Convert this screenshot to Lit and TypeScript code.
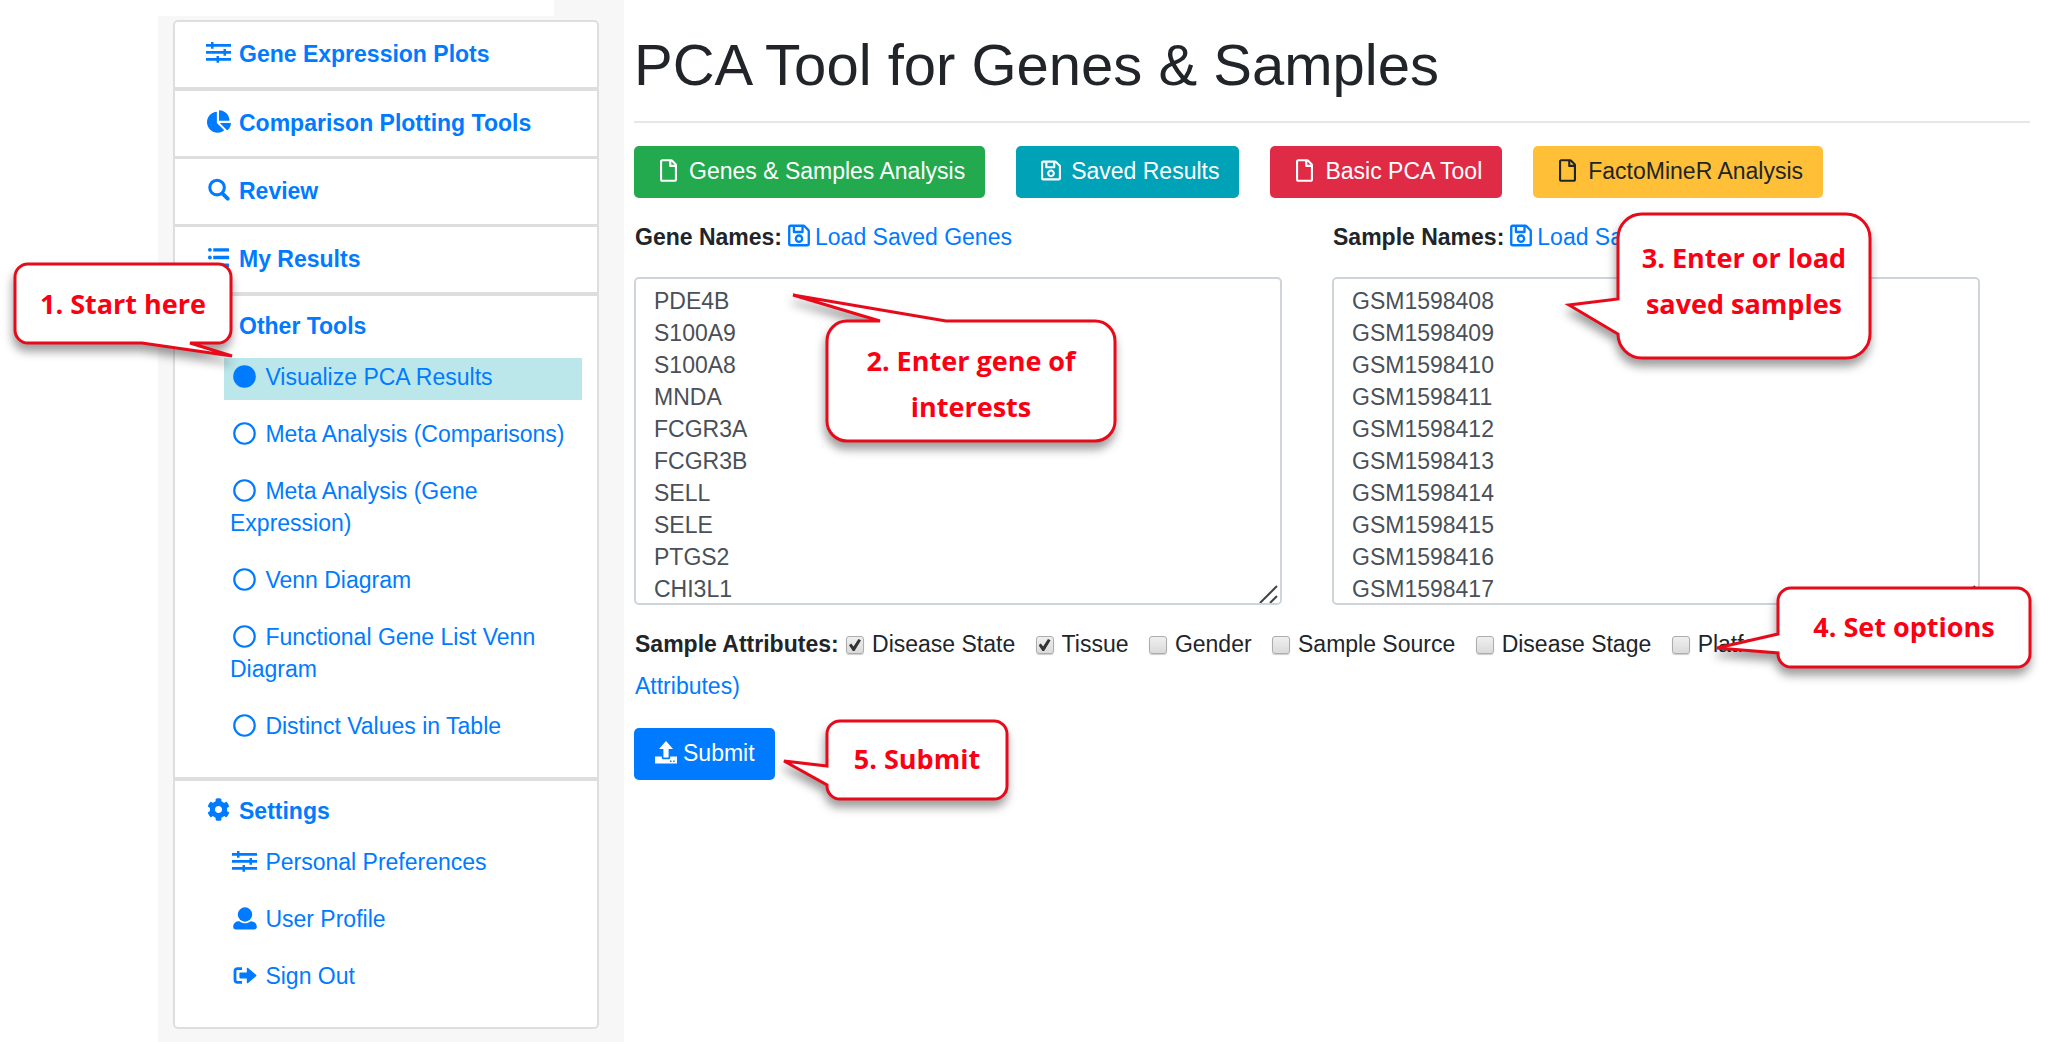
import { LitElement, html, css, svg, nothing, type TemplateResult } from "lit";
import { customElement, property } from "lit/decorators.js";
import { classMap } from "lit/directives/class-map.js";
import { styleMap } from "lit/directives/style-map.js";

interface Glyph {
  w: number;
  h: number;
  body: TemplateResult;
}

const GLYPHS: Record<string, Glyph> = {
  sliders: {
    w: 27,
    h: 23,
    body: svg`<path d="M1 3h5V1h2.500v2h17.500v2.800H8.500v2H6v-2H1zM1 10h17.500V8H21v2h5v2.800h-5v2h-2.500v-2H1zM1 17h10.500v-2H14v2h12v2.800H14v2h-2.500v-2H1z"/>`,
  },
  pie: {
    w: 544,
    h: 512,
    body: svg`<path d="M527.79 288H290.5l158.03 158.03c6.04 6.04 15.98 6.53 22.19.68 38.7-36.46 65.32-85.61 73.13-140.86 1.34-9.46-6.51-17.85-16.06-17.85zm-15.83-64.8C503.72 103.74 408.26 8.28 288.8.04 279.68-.59 272 7.1 272 16.24V240h223.77c9.14 0 16.82-7.68 16.19-16.8zM224 288V50.71c0-9.55-8.39-17.4-17.84-16.06C86.99 51.49-4.1 155.6.14 280.37 4.5 408.51 114.83 513.59 243.03 511.98c50.4-.63 96.97-16.87 135.26-44.03 7.9-5.6 8.42-17.23 1.57-24.08L224 288z"/>`,
  },
  search: {
    w: 24,
    h: 24,
    body: svg`<g fill="none" stroke="currentColor"><circle cx="10.5" cy="10" r="7.6" stroke-width="3.2"/><path d="M16 16l5.6 5.6" stroke-width="4" stroke-linecap="round"/></g>`,
  },
  list: {
    w: 24,
    h: 24,
    body: svg`<circle cx="3" cy="4" r="2"/><circle cx="3" cy="12" r="2"/><circle cx="3" cy="20" r="2"/><rect x="6.500" y="2.300" width="16.500" height="3.500" rx=".6"/><rect x="6.500" y="10.300" width="16.500" height="3.500" rx=".6"/><rect x="6.500" y="18.300" width="16.500" height="3.500" rx=".6"/>`,
  },
  cog: {
    w: 512,
    h: 512,
    body: svg`<path d="M487.4 315.7l-42.6-24.6c4.3-23.2 4.3-47 0-70.2l42.6-24.6c4.9-2.8 7.1-8.6 5.5-14-11.1-35.6-30-67.8-54.7-94.6-3.8-4.1-10-5.1-14.8-2.3L380.8 110c-17.9-15.4-38.5-27.3-60.8-35.1V25.8c0-5.6-3.9-10.5-9.4-11.7-36.7-8.2-74.3-7.8-109.2 0-5.5 1.2-9.4 6.1-9.4 11.7V75c-22.2 7.9-42.8 19.8-60.8 35.1L88.7 85.5c-4.9-2.8-11-1.9-14.8 2.3-24.7 26.7-43.6 58.9-54.7 94.6-1.7 5.4.6 11.2 5.5 14L67.3 221c-4.3 23.2-4.3 47 0 70.2l-42.6 24.6c-4.9 2.8-7.1 8.6-5.5 14 11.1 35.6 30 67.8 54.7 94.6 3.8 4.1 10 5.1 14.8 2.3l42.6-24.6c17.9 15.4 38.5 27.3 60.8 35.1v49.2c0 5.6 3.9 10.5 9.4 11.7 36.7 8.2 74.3 7.8 109.2 0 5.5-1.2 9.4-6.1 9.4-11.7v-49.2c22.2-7.9 42.8-19.8 60.8-35.1l42.6 24.6c4.9 2.8 11 1.9 14.8-2.3 24.7-26.7 43.6-58.9 54.7-94.6 1.5-5.5-.7-11.3-5.6-14.1zM256 336c-44.1 0-80-35.9-80-80s35.9-80 80-80 80 35.9 80 80-35.9 80-80 80z"/>`,
  },
  dot: { w: 24, h: 24, body: svg`<circle cx="12" cy="12" r="11.800"/>` },
  ring: {
    w: 24,
    h: 24,
    body: svg`<circle cx="12" cy="12" r="10.700" fill="none" stroke="currentColor" stroke-width="2.300"/>`,
  },
  user: {
    w: 24,
    h: 23,
    body: svg`<circle cx="12" cy="7.500" r="7.200"/><path d="M.2 19.800c0-3.600 2.600-5.600 6.200-5.600 1.800 1.500 3.600 2 5.600 2s3.800-.5 5.600-2c3.600 0 6.200 2 6.200 5.600 0 1.700-1 2.800-2.700 2.800H2.900C1.200 22.600.2 21.500.2 19.800z"/>`,
  },
  signout: {
    w: 24,
    h: 23,
    body: svg`<path d="M9 4.600H4.600Q2 4.600 2 7.200v8.600q0 2.600 2.600 2.600H9" fill="none" stroke="currentColor" stroke-width="2.800"/><path d="M7.200 8.600h6.600V4.700q0-1.600 1.300-.7l7.900 6.700q.9.800 0 1.600l-7.900 6.700q-1.300.9-1.300-.7v-3.900H7.200q-.8 0-.8-.8V9.400q0-.8.8-.8z"/>`,
  },
  file: {
    w: 384,
    h: 512,
    body: svg`<path d="M369.9 97.9L286 14C277 5 264.8-.1 252.1-.1H48C21.500 0 0 21.500 0 48v416c0 26.500 21.500 48 48 48h288c26.500 0 48-21.500 48-48V131.900c0-12.700-5.100-25-14.100-34zM332.100 128H256V51.900l76.100 76.100zM48 464V48h160v104c0 13.300 10.700 24 24 24h104v288H48z"/>`,
  },
  save: {
    w: 448,
    h: 512,
    body: svg`<path d="M433.941 129.941l-83.882-83.882A48 48 0 0 0 316.118 32H48C21.490 32 0 53.490 0 80v352c0 26.510 21.490 48 48 48h352c26.510 0 48-21.490 48-48V163.882a48 48 0 0 0-14.059-33.941zM272 80v80H144V80h128zm122 352H54a6 6 0 0 1-6-6V86a6 6 0 0 1 6-6h42v104c0 13.255 10.745 24 24 24h176c13.255 0 24-10.745 24-24V83.882l78.243 78.243a6 6 0 0 1 1.757 4.243V426a6 6 0 0 1-6 6zM224 232c-48.523 0-88 39.477-88 88s39.477 88 88 88 88-39.477 88-88-39.477-88-88-88zm0 128c-22.056 0-40-17.944-40-40s17.944-40 40-40 40 17.944 40 40-17.944 40-40 40z"/>`,
  },
  upload: {
    w: 22,
    h: 23,
    body: svg`<path d="M11 0l7 8h-4.400v8.500H8.400V8H4z"/><path fill-rule="evenodd" d="M0 15.500h6.800v1.200q0 1.500 1.500 1.500h5.400q1.500 0 1.500-1.500v-1.200H22V22.500H0zM15 19.600v1.300h1.500v-1.300zM18.200 19.600v1.300h1.500v-1.300z"/>`,
  },
};

@customElement("ui-icon")
export class UiIcon extends LitElement {
  @property() name = "";
  @property({ type: Number }) size = 23;

  static styles = css`
    :host {
      display: inline-flex;
      justify-content: center;
      align-items: center;
      height: 23px;
      vertical-align: -3px;
    }
    .glyph {
      display: block;
      flex: none;
      fill: currentColor;
    }
  `;

  render() {
    const g = GLYPHS[this.name];
    if (!g) return nothing;
    return html`<svg
      class="glyph"
      viewBox="0 0 ${g.w} ${g.h}"
      width=${Math.round((g.w / g.h) * this.size)}
      height=${this.size}
      aria-hidden="true"
    >
      ${g.body}
    </svg>`;
  }
}

interface Box {
  x: number;
  y: number;
  w: number;
  h: number;
  r: number;
}
type Point = [number, number];
interface Note extends Box {
  lines: string[];
  side: "left" | "top" | "bottom";
  /* start of the tail's root, its tip, end of its root; page coordinates */
  tail: [Point, Point, Point];
}

const NOTES: Note[] = [
  { x: 15, y: 264, w: 216, h: 79, r: 13, side: "bottom", lines: ["1. Start here"], tail: [[190, 343], [232, 356], [142, 343]] },
  { x: 827, y: 321, w: 288, h: 120, r: 20, side: "top", lines: ["2. Enter gene of", "interests"], tail: [[880, 321], [793, 295], [946, 321]] },
  { x: 1618, y: 214, w: 252, h: 144, r: 24, side: "left", lines: ["3. Enter or load", "saved samples"], tail: [[1618, 334], [1569, 305], [1618, 299]] },
  { x: 1778, y: 588, w: 252, h: 79, r: 13, side: "left", lines: ["4. Set options"], tail: [[1778, 653], [1717, 648], [1778, 634]] },
  { x: 827, y: 721, w: 180, h: 78, r: 13, side: "left", lines: ["5. Submit"], tail: [[827, 785], [784, 761], [827, 766]] },
];

function outline(n: Note): string {
  const { w, h, r } = n;
  const [a, b, c] = n.tail.map(([px, py]) => `L${px - n.x} ${py - n.y}`);
  const tail = a + b + c;
  const arc = (x: number, y: number) => `A${r} ${r} 0 0 1 ${x} ${y}`;
  return [
    `M${r} 0`,
    n.side === "top" ? tail : "",
    `L${w - r} 0${arc(w, r)}L${w} ${h - r}${arc(w - r, h)}`,
    n.side === "bottom" ? tail : "",
    `L${r} ${h}${arc(0, h - r)}`,
    n.side === "left" ? tail : "",
    `L0 ${r}${arc(r, 0)}Z`,
  ].join("");
}

interface Entry {
  icon: string;
  text: string;
  active?: boolean;
}
interface Section extends Entry {
  items?: Entry[];
  thin?: boolean;
}

const MENU: Section[] = [
  { icon: "sliders", text: "Gene Expression Plots" },
  { icon: "pie", text: "Comparison Plotting Tools", thin: true },
  { icon: "search", text: "Review", thin: true },
  { icon: "list", text: "My Results" },
  {
    icon: "list",
    text: "Other Tools",
    items: [
      { icon: "dot", text: "Visualize PCA Results", active: true },
      { icon: "ring", text: "Meta Analysis (Comparisons)" },
      { icon: "ring", text: "Meta Analysis (Gene Expression)" },
      { icon: "ring", text: "Venn Diagram" },
      { icon: "ring", text: "Functional Gene List Venn Diagram" },
      { icon: "ring", text: "Distinct Values in Table" },
    ],
  },
  {
    icon: "cog",
    text: "Settings",
    items: [
      { icon: "sliders", text: "Personal Preferences" },
      { icon: "user", text: "User Profile" },
      { icon: "signout", text: "Sign Out" },
    ],
  },
];

const ACTIONS = [
  { icon: "file", text: "Genes & Samples Analysis", tone: "green" },
  { icon: "save", text: "Saved Results", tone: "teal" },
  { icon: "file", text: "Basic PCA Tool", tone: "red" },
  { icon: "file", text: "FactoMineR Analysis", tone: "amber" },
];

const GENES = ["PDE4B", "S100A9", "S100A8", "MNDA", "FCGR3A", "FCGR3B", "SELL", "SELE", "PTGS2", "CHI3L1"];
const SAMPLES = Array.from({ length: 10 }, (_, i) => `GSM${1598408 + i}`);

const ATTRIBUTES = [
  { text: "Disease State", on: true },
  { text: "Tissue", on: true },
  { text: "Gender", on: false },
  { text: "Sample Source", on: false },
  { text: "Disease Stage", on: false },
  { text: "Platform", on: false },
];

@customElement("app-root")
export class AppRoot extends LitElement {
  static styles = css`
    :host {
      display: block;
      position: relative;
      min-height: 100vh;
      overflow: hidden;
      background: #fff;
      color: #212529;
      font: 23px/32px "Liberation Sans", Arial, sans-serif;
    }
    *,
    *::before {
      box-sizing: border-box;
    }
    a {
      color: #007bff;
      text-decoration: none;
    }
    .page {
      display: flex;
      min-height: 100vh;
      padding-left: 158px;
    }
    .side {
      flex: 0 0 466px;
      padding: 20px 25px 14px 15px;
      background: linear-gradient(#fff, #fff) 0 0 / 396px 16px no-repeat #f7f7f7;
    }
    .card {
      border: 2px solid #dedede;
      border-radius: 5px;
      background: #fff;
    }
    .section {
      border-bottom: 4px solid #dedede;
    }
    .section.thin {
      border-bottom-width: 3px;
    }
    .section:last-child {
      border-bottom: 0;
    }
    .head {
      display: flex;
      gap: 6px;
      padding: 16px 0 17px 29px;
      font-weight: bold;
    }
    .section.open .head {
      padding-block: 14px 16px;
    }
    .head ui-icon {
      margin-top: 3px;
    }
    .head ui-icon,
    .item ui-icon,
    .btn ui-icon {
      width: 29px;
    }
    .items {
      margin: 0;
      padding: 0 15px 13px 49px;
      list-style: none;
    }
    .item {
      margin-bottom: 15px;
      padding: 3px 6px 7px;
    }
    .item.active {
      background: #bbe7ea;
    }
    .main {
      flex: 1;
      min-width: 0;
      padding: 31px 16px 0 10px;
    }
    h1 {
      margin: 0;
      padding-bottom: 22px;
      border-bottom: 2px solid #e6e6e6;
      font-size: 58px;
      line-height: 68px;
      font-weight: 400;
    }
    .actions {
      display: flex;
      flex-wrap: wrap;
      gap: 31px;
      margin-top: 23px;
    }
    .btn {
      display: inline-flex;
      align-items: center;
      gap: 6px;
      height: 52px;
      padding: 0 20px 3px;
      border: 0;
      border-radius: 5px;
      background: #007bff;
      color: #fff;
      font: inherit;
    }
    .green {
      background: #23a94e;
    }
    .teal {
      background: #00a2b8;
    }
    .red {
      background: #df2b46;
    }
    .amber {
      background: #ffc038;
      color: #212529;
    }
    .fields {
      display: grid;
      grid-template-columns: 1fr 1fr;
      margin-top: 23px;
    }
    .field {
      padding-right: 50px;
    }
    .caption {
      display: flex;
      align-items: center;
      gap: 6px;
      margin-bottom: 24px;
      padding-left: 1px;
      white-space: nowrap;
    }
    .caption label,
    .lead {
      font-weight: bold;
    }
    .load {
      display: flex;
      align-items: center;
      gap: 5px;
    }
    .load ui-icon {
      margin-bottom: 3px;
    }
    .area {
      position: relative;
    }
    textarea {
      display: block;
      width: 100%;
      height: 328px;
      padding: 6px 18px;
      border: 2px solid #ced4da;
      border-radius: 5px;
      background: #fff;
      color: #495057;
      font: inherit;
      resize: none;
      overflow: hidden;
    }
    .grip {
      position: absolute;
      right: 3px;
      bottom: 2px;
      width: 20px;
      height: 18px;
      fill: none;
      stroke: #444;
      stroke-width: 2;
    }
    .attributes {
      margin-top: 18px;
      padding-left: 1px;
      line-height: 42px;
    }
    .option {
      margin-right: 13px;
      white-space: nowrap;
    }
    .more {
      display: block;
    }
    .tick {
      appearance: none;
      position: relative;
      width: 18px;
      height: 18px;
      margin: 0 8px 0 1px;
      border: 1px solid #adadad;
      border-radius: 3px;
      background: linear-gradient(#efefef, #dadada);
      box-shadow: 0 1px 1px #ccc;
      vertical-align: -2px;
    }
    .tick:checked::before {
      content: "";
      position: absolute;
      inset: 2px;
      background: #333;
      clip-path: polygon(0 52%, 18% 38%, 38% 62%, 78% 0, 100% 10%, 46% 100%, 32% 100%);
    }
    .submit {
      margin-top: 21px;
    }
    .submit ui-icon {
      width: 23px;
    }
    .note {
      position: absolute;
      display: grid;
      align-content: center;
      text-align: center;
      color: #fb0012;
      font: bold 27px/46px "Open Sans", "Noto Sans", sans-serif;
      white-space: nowrap;
    }
    .note.top {
      padding-top: 6px;
    }
    .note.left {
      padding-bottom: 2px;
    }
    .note.left.tall {
      padding-bottom: 10px;
    }
    .bubble {
      position: absolute;
      inset: 0;
      width: 100%;
      height: 100%;
      overflow: visible;
      fill: #fff;
      stroke: #e60a1a;
      stroke-width: 3;
      filter: drop-shadow(-1px 7px 5px rgba(0, 0, 0, 0.38));
    }
    .line {
      position: relative;
    }
  `;

  private section(s: Section) {
    return html`<div class=${classMap({ section: true, thin: !!s.thin, open: !!s.items })}>
      <a class="head" href="#"><ui-icon name=${s.icon}></ui-icon>${s.text}</a>
      ${s.items
        ? html`<ul class="items">
            ${s.items.map(
              (i) => html`<li class=${classMap({ item: true, active: !!i.active })}>
                <a href="#"><ui-icon name=${i.icon}></ui-icon> ${i.text}</a>
              </li>`
            )}
          </ul>`
        : nothing}
    </div>`;
  }

  private field(id: string, label: string, link: string, rows: string[]) {
    return html`<div class="field">
      <div class="caption">
        <label for=${id}>${label}</label>
        <a class="load" href="#"><ui-icon name="save" size="25"></ui-icon>${link}</a>
      </div>
      <div class="area">
        <textarea id=${id} spellcheck="false" .value=${rows.join("\n")}></textarea>
        <svg class="grip" viewBox="0 0 20 18" aria-hidden="true"><path d="M1 18L18 1M11 18l7-7" /></svg>
      </div>
    </div>`;
  }

  private note(n: Note) {
    const box = { left: `${n.x}px`, top: `${n.y}px`, width: `${n.w}px`, height: `${n.h}px` };
    return html`<div class="note ${n.side} ${n.lines.length > 1 ? "tall" : ""}" style=${styleMap(box)}>
      <svg class="bubble" aria-hidden="true"><path d=${outline(n)} /></svg>
      ${n.lines.map((l) => html`<div class="line">${l}</div>`)}
    </div>`;
  }

  render() {
    return html`
      <div class="page">
        <aside class="side">
          <nav class="card">${MENU.map((s) => this.section(s))}</nav>
        </aside>
        <main class="main">
          <h1>PCA Tool for Genes &amp; Samples</h1>
          <div class="actions">
            ${ACTIONS.map(
              (a) => html`<button type="button" class="btn ${a.tone}"><ui-icon name=${a.icon}></ui-icon>${a.text}</button>`
            )}
          </div>
          <div class="fields">
            ${this.field("genes", "Gene Names:", "Load Saved Genes", GENES)}
            ${this.field("samples", "Sample Names:", "Load Saved", SAMPLES)}
          </div>
          <div class="attributes">
            <span class="lead">Sample Attributes:</span>
            ${ATTRIBUTES.map(
              (a) => html`<label class="option"><input class="tick" type="checkbox" .checked=${a.on} />${a.text}</label> `
            )}
            <a class="more" href="#">Attributes)</a>
          </div>
          <button type="button" class="btn submit"><ui-icon name="upload"></ui-icon>Submit</button>
        </main>
      </div>
      ${NOTES.map((n) => this.note(n))}
    `;
  }
}
